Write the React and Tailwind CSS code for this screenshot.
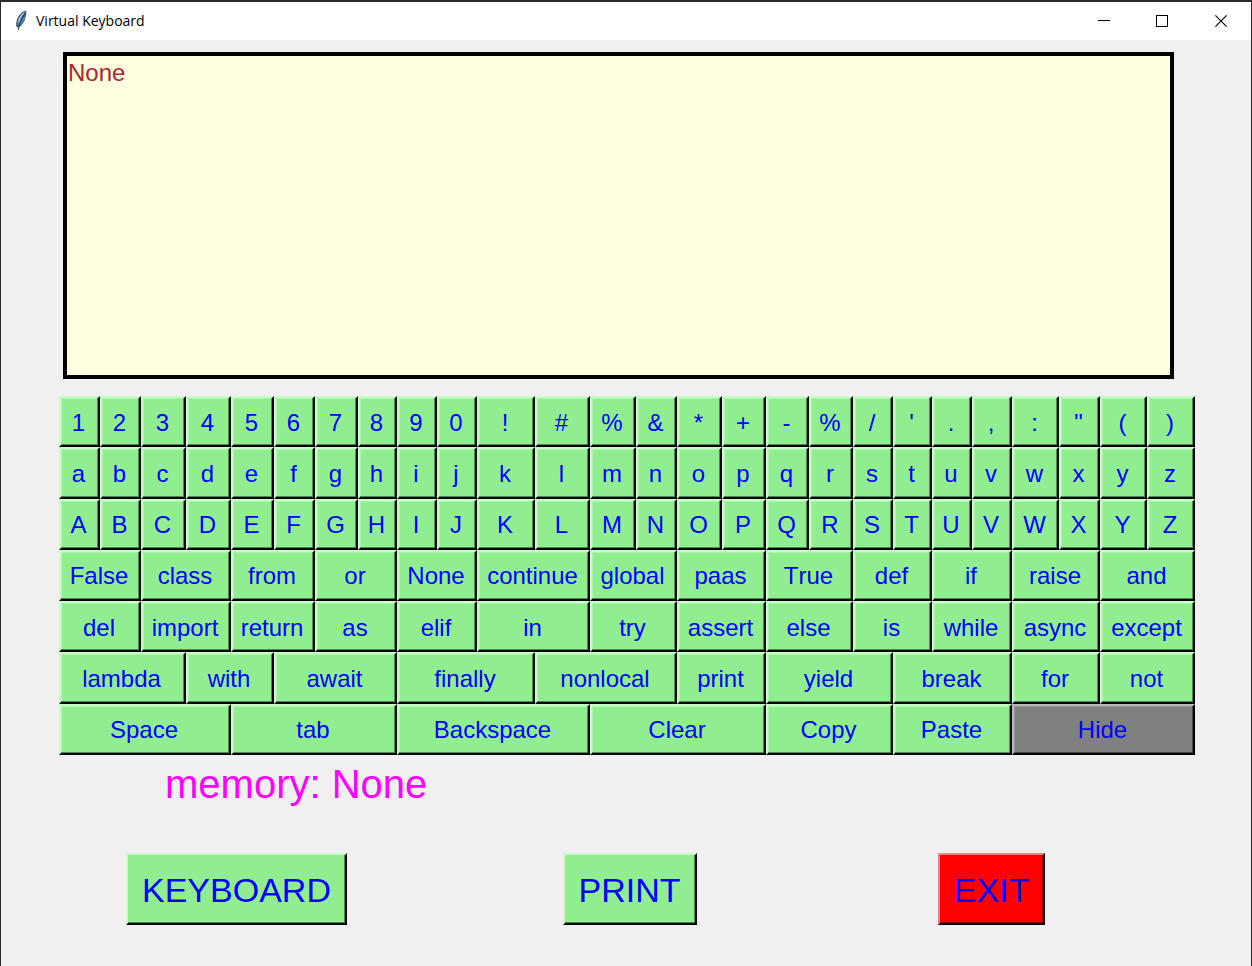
import React, { useState } from "react";

const GREEN_KEY =
  "bg-[#90ee90] border-t-[#c8ffc8] border-l-[#c8ffc8] shadow-[inset_-1px_-1px_0_#4d8a4d,inset_1px_1px_0_#acf6ac]";
const GRAY_KEY =
  "bg-[#808080] border-t-[#b8b8b8] border-l-[#b8b8b8] shadow-[inset_-1px_-1px_0_#4a4a4a,inset_1px_1px_0_#959595]";

const SPANS = {
  1: "col-span-1",
  2: "col-span-2",
  3: "col-span-3",
  4: "col-span-4",
};

const row = (labels, span) => labels.map((label) => ({ label, span }));

const KEYS = [
  ...row([..."1234567890!#%&*+-%/'.,:\"()"], 1),
  ...row([..."abcdefghijklmnopqrstuvwxyz"], 1),
  ...row([..."ABCDEFGHIJKLMNOPQRSTUVWXYZ"], 1),
  ...row(["False", "class", "from", "or", "None", "continue", "global", "paas", "True", "def", "if", "raise", "and"], 2),
  ...row(["del", "import", "return", "as", "elif", "in", "try", "assert", "else", "is", "while", "async", "except"], 2),
  { label: "lambda", span: 3 },
  { label: "with", span: 2 },
  { label: "await", span: 3 },
  { label: "finally", span: 3 },
  { label: "nonlocal", span: 3 },
  { label: "print", span: 2 },
  { label: "yield", span: 3 },
  { label: "break", span: 3 },
  { label: "for", span: 2 },
  { label: "not", span: 2 },
  ...row(["Space", "tab", "Backspace", "Clear"], 4),
  ...row(["Copy", "Paste"], 3),
  { label: "Hide", span: 4 },
];

function Key({ label, span, onPress }) {
  const skin = label === "Hide" ? GRAY_KEY : GREEN_KEY;
  return (
    <button
      type="button"
      onClick={() => onPress(label)}
      className={`${SPANS[span]} ${skin} flex items-center justify-center border-2 border-r-black border-b-black pt-0.5 pr-0.5 text-2xl text-[#0000ff]`}
    >
      {label}
    </button>
  );
}

function ActionButton({ label, danger }) {
  const skin = danger
    ? "bg-[#ff0000] border-t-[#ff8080] border-l-[#ff8080] shadow-[inset_-1px_-1px_0_#900000]"
    : "bg-[#90ee90] border-t-[#c8ffc8] border-l-[#c8ffc8] shadow-[inset_-1px_-1px_0_#4d8a4d]";
  return (
    <button
      type="button"
      className={`${skin} h-[72px] border-2 border-r-black border-b-black px-[14px] pt-0.5 text-[34px] leading-10 text-[#0000ff]`}
    >
      {label}
    </button>
  );
}

function FeatherIcon() {
  return (
    <svg width="14" height="22" viewBox="0 0 14 22" aria-hidden="true">
      <path d="M11.800 1.200C8.500 1.400 5 5 3.600 9.200c-.8 2.500-1.200 4.800-.8 7.400l1.600.6c3.200-1.800 5.400-5.200 6.500-9 .7-2.500 1.100-4.800.9-7z" fill="#4a78a8" stroke="#27364a" strokeWidth=".8" />
      <path d="M10 3C7.200 5.300 5.400 8.500 4.400 12.500" fill="none" stroke="#a9c8e8" strokeWidth="1.500" />
      <path d="M10.600 7C9.600 10.300 8 13 5.800 15" fill="none" stroke="#6f9cc9" strokeWidth="1" />
      <path d="M10.800 3.500C8 8.500 5.400 13.500 4.300 20" fill="none" stroke="#1b1f27" strokeWidth=".9" />
    </svg>
  );
}

function TitleBar() {
  return (
    <header className="flex h-[38px] items-center bg-white pl-[13px] font-['Open_Sans',sans-serif] text-sm text-black">
      <FeatherIcon />
      <h1 className="flex-1 pl-2">Virtual Keyboard</h1>
      <button type="button" aria-label="Minimize" className="flex h-full w-[58px] items-center justify-center">
        <svg width="12" height="12" viewBox="0 0 12 12" shapeRendering="crispEdges">
          <path d="M0 5.500h12" stroke="#000" />
        </svg>
      </button>
      <button type="button" aria-label="Maximize" className="flex h-full w-[58px] items-center justify-center">
        <svg width="12" height="12" viewBox="0 0 12 12" shapeRendering="crispEdges">
          <path d="M.5.5h11v11H.5z" fill="none" stroke="#000" />
        </svg>
      </button>
      <button type="button" aria-label="Close" className="flex h-full w-[60px] items-center justify-center">
        <svg width="12" height="12" viewBox="0 0 12 12">
          <path d="M.4.4l11.200 11.200M11.600.4L.4 11.600" stroke="#000" strokeWidth="1.100" />
        </svg>
      </button>
    </header>
  );
}

export default function App() {
  const [text, setText] = useState("None");

  const press = (label) => {
    if (label === "Clear") setText("");
    else if (label === "Backspace") setText((t) => t.slice(0, -1));
    else if (label === "Space") setText((t) => t + " ");
    else if (label === "tab") setText((t) => t + "\t");
    else if (!["Copy", "Paste", "Hide"].includes(label)) setText((t) => t + label);
  };

  return (
    <div className="flex min-h-screen flex-col border-x border-t-2 border-[#2b2a2b] bg-[#f0f0f0] font-['Liberation_Sans',Arial,sans-serif] [font-kerning:none]">
      <TitleBar />
      <main className="flex flex-col pt-3 pr-14 pl-[58px]">
        <textarea
          aria-label="Typed text"
          spellCheck={false}
          value={text}
          onChange={(e) => setText(e.target.value)}
          className="mr-[21px] ml-1 block h-[327px] resize-none border-4 border-black bg-[#ffffe0] px-px pt-px text-2xl text-[#a52a2a] outline-none"
        />
        <div className="mt-[17px] grid h-[359px] grid-cols-[41fr_41fr_45fr_45fr_43fr_41fr_43fr_39fr_40fr_40fr_58fr_55fr_46fr_41fr_45fr_44fr_43fr_44fr_40fr_39fr_40fr_40fr_47fr_41fr_47fr_48fr] grid-rows-7">
          {KEYS.map((key, i) => (
            <Key key={i} {...key} onPress={press} />
          ))}
        </div>
        <div className="mt-[5px] grid grid-cols-[355fr_431fr_293fr] justify-items-center pr-[57px]">
          <output className="col-span-3 mb-[45px] justify-self-start pl-[106px] text-[40px] leading-[48px] text-[#ff00ff]">
            memory: None
          </output>
          <ActionButton label="KEYBOARD" />
          <ActionButton label="PRINT" />
          <ActionButton label="EXIT" danger />
        </div>
      </main>
    </div>
  );
}
